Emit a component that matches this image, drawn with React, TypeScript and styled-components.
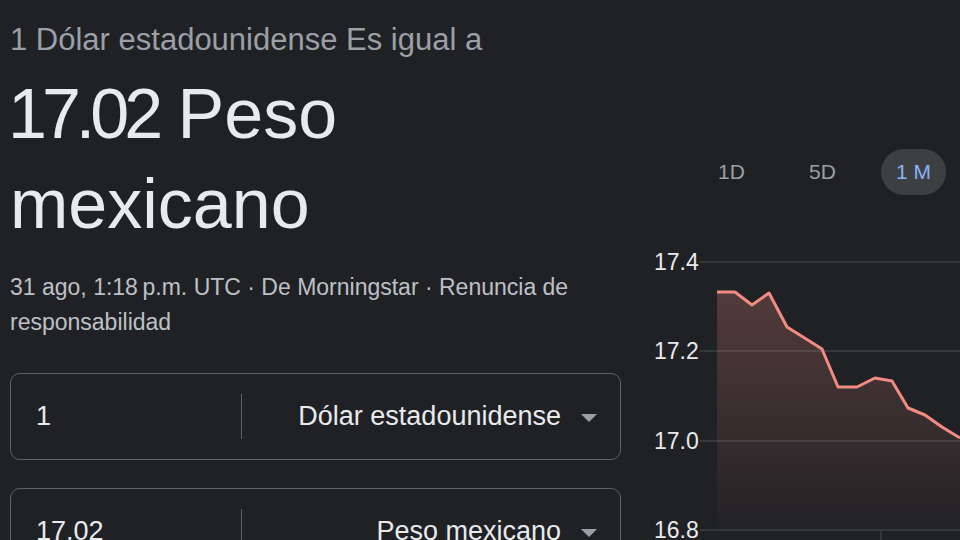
import React from 'react'
import styled, { createGlobalStyle } from 'styled-components'

const GlobalStyle = createGlobalStyle`
  html, body {
    margin: 0;
    height: 540px;
    overflow: hidden;
    background: #202124;
  }
  body {
    font-family: 'Liberation Sans', Arial, sans-serif;
  }
`

const Page = styled.div`
  display: flex;
  width: 960px;
  height: 540px;
  padding-left: 10px;
  box-sizing: border-box;
  overflow: hidden;
`

const LeftColumn = styled.div`
  width: 611px;
  flex-shrink: 0;
  display: flex;
  flex-direction: column;
  padding-top: 22px;
`

const Heading = styled.div`
  font-size: 31px;
  line-height: 36px;
  color: #9aa0a6;
`

const Result = styled.div`
  margin-top: 11px;
  font-size: 70px;
  line-height: 90px;
  color: #e8eaed;
`

const ResultNumber = styled.span`
  letter-spacing: -5px;
  margin-left: -2px;
`

const Meta = styled.div`
  margin-top: 21px;
  font-size: 23px;
  line-height: 35px;
  color: #bdc1c6;
`

const Converter = styled.div`
  margin-top: 33px;
  display: flex;
  flex-direction: column;
  gap: 28px;
`

const Field = styled.div`
  height: 87px;
  box-sizing: border-box;
  border: 1px solid #5f6368;
  border-radius: 10px;
  display: flex;
  align-items: center;
  flex-shrink: 0;
`

const Amount = styled.div`
  width: 230px;
  padding-left: 25px;
  box-sizing: border-box;
  font-size: 27px;
  color: #e8eaed;
`

const Divider = styled.div`
  width: 1px;
  height: 45px;
  background: #5f6368;
`

const Currency = styled.div`
  flex: 1;
  display: flex;
  justify-content: flex-end;
  align-items: center;
  gap: 20px;
  padding-right: 23px;
  font-size: 27px;
  color: #e8eaed;
`

const Caret = styled.span`
  width: 0;
  height: 0;
  border-left: 8.5px solid transparent;
  border-right: 8.5px solid transparent;
  border-top: 8px solid #9aa0a6;
  margin-top: 2px;
`

const RightColumn = styled.div`
  flex: 1;
  margin-left: 19px;
  padding-top: 149px;
  display: flex;
  flex-direction: column;
  overflow: hidden;
`

const Tabs = styled.div`
  display: flex;
  gap: 26px;
  padding-left: 59px;
`

const Tab = styled.div<{ $active?: boolean }>`
  width: 65px;
  height: 46px;
  border-radius: 23px;
  display: flex;
  align-items: center;
  justify-content: center;
  font-size: 21px;
  color: ${({ $active }) => ($active ? '#8ab4f8' : '#9aa0a6')};
  background: ${({ $active }) => ($active ? '#3c4043' : 'transparent')};
`

const ChartSvg = styled.svg`
  display: block;
  flex-shrink: 0;
`

// chart points, relative to the chart's top-left corner
const points: [number, number][] = [
  [77, 97], [95, 97], [112, 110], [129, 98], [147, 132], [163, 142], [182, 154],
  [198, 192], [217, 192], [235, 183], [252, 186], [268, 213], [285, 220],
  [302, 232], [320, 243],
]

const gridRows = [
  { label: '17.4', y: 67 },
  { label: '17.2', y: 156 },
  { label: '17.0', y: 246 },
  { label: '16.8', y: 335 },
]

function Chart() {
  const line = points.map(([x, y]) => `${x},${y}`).join(' ')
  const area = `${line} 320,335 77,335`
  return (
    <ChartSvg width={320} height={345} viewBox="0 0 320 345">
      <defs>
        <linearGradient id="fill" gradientUnits="userSpaceOnUse" x1="0" y1="97" x2="0" y2="335">
          <stop offset="0" stopColor="#f28b82" stopOpacity="0.24" />
          <stop offset="1" stopColor="#f28b82" stopOpacity="0.01" />
        </linearGradient>
      </defs>
      {gridRows.map(r => (
        <g key={r.label}>
          <line x1={60} x2={320} y1={r.y} y2={r.y} stroke="#3c4043" strokeWidth={1.5} />
          <text
            x={14}
            y={r.y + 8}
            fill="#e8eaed"
            fontSize={23}
            fontFamily="'Liberation Sans', Arial, sans-serif"
          >
            {r.label}
          </text>
        </g>
      ))}
      <line x1={241} x2={241} y1={335} y2={345} stroke="#3c4043" strokeWidth={1.5} />
      <polygon points={area} fill="url(#fill)" />
      <polyline points={line} fill="none" stroke="#f28b82" strokeWidth={3} strokeLinejoin="round" />
    </ChartSvg>
  )
}

export default function App() {
  return (
    <>
      <GlobalStyle />
      <Page>
        <LeftColumn>
          <Heading>1 Dólar estadounidense Es igual a</Heading>
          <Result>
            <ResultNumber>17.02</ResultNumber> Peso
            <br />
            mexicano
          </Result>
          <Meta>
            31 ago, 1:18{'\u202F'}p.m. UTC · De Morningstar · Renuncia de
            <br />
            responsabilidad
          </Meta>
          <Converter>
            <Field>
              <Amount>1</Amount>
              <Divider />
              <Currency>
                Dólar estadounidense
                <Caret />
              </Currency>
            </Field>
            <Field>
              <Amount>17.02</Amount>
              <Divider />
              <Currency>
                Peso mexicano
                <Caret />
              </Currency>
            </Field>
          </Converter>
        </LeftColumn>
        <RightColumn>
          <Tabs>
            <Tab>1D</Tab>
            <Tab>5D</Tab>
            <Tab $active>1 M</Tab>
          </Tabs>
          <Chart />
        </RightColumn>
      </Page>
    </>
  )
}
